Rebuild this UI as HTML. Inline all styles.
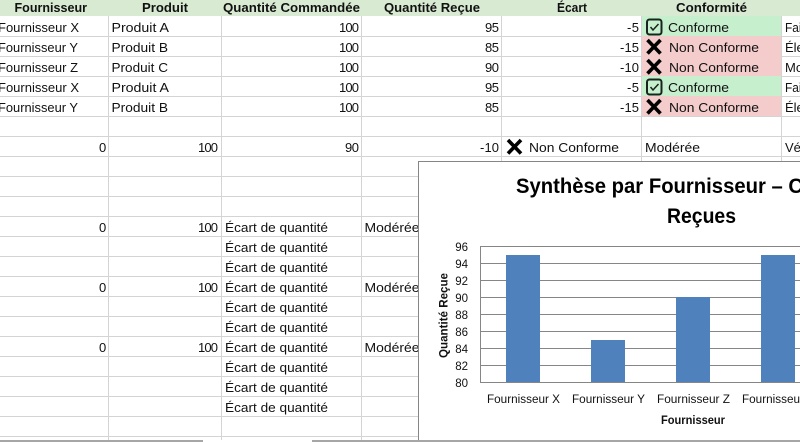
<!DOCTYPE html>
<html lang="fr">
<head>
<meta charset="utf-8">
<title>Synthèse</title>
<style>
html,body{margin:0;padding:0;background:#fff;width:800px;height:442px;overflow:hidden}
svg{display:block;font-family:"Liberation Sans",sans-serif}
.c{font-size:13px;fill:#111}
.h{font-size:13px;font-weight:bold;fill:#111}
.e{text-anchor:end}
.g{fill:#d4d4d4}
.a{font-size:11.5px;fill:#111}
</style>
</head>
<body>
<svg width="800" height="442" viewBox="0 0 800 442" xmlns="http://www.w3.org/2000/svg" xmlns:xlink="http://www.w3.org/1999/xlink">
<defs>
<g id="x"><path d="M1.500 1L14.500 14.500M14.500 1L1.500 14.500" stroke="#000" stroke-width="3.600" fill="none"/></g>
<g id="k"><rect x="1" y="0.500" width="14.500" height="15" rx="2.500" fill="none" stroke="#18241d" stroke-width="2"/><path d="M4.500 8L7 11L12.500 5" stroke="#18241d" stroke-width="1.500" fill="none"/></g>
</defs>

<rect x="0" y="0" width="800" height="16" fill="#d9ead3"/>
<rect x="642" y="16" width="139" height="20" fill="#c6efce"/>
<rect x="642" y="36" width="139" height="40" fill="#f4cccc"/>
<rect x="642" y="76" width="139" height="20" fill="#c6efce"/>
<rect x="642" y="96" width="139" height="20" fill="#f4cccc"/>

<!-- horizontal grid -->
<g class="g">
<rect x="0" y="36" width="642" height="1"/><rect x="781" y="36" width="19" height="1"/>
<rect x="0" y="56" width="642" height="1"/><rect x="781" y="56" width="19" height="1"/>
<rect x="0" y="76" width="642" height="1"/><rect x="781" y="76" width="19" height="1"/>
<rect x="0" y="96" width="642" height="1"/><rect x="781" y="96" width="19" height="1"/>
<rect x="0" y="116" width="800" height="1"/>
<rect x="0" y="136" width="800" height="1"/>
<rect x="0" y="156" width="800" height="1"/>
<rect x="0" y="176" width="800" height="1"/>
<rect x="0" y="196" width="800" height="1"/>
<rect x="0" y="216" width="800" height="1"/>
<rect x="0" y="236" width="800" height="1"/>
<rect x="0" y="256" width="800" height="1"/>
<rect x="0" y="276" width="800" height="1"/>
<rect x="0" y="296" width="800" height="1"/>
<rect x="0" y="316" width="800" height="1"/>
<rect x="0" y="336" width="800" height="1"/>
<rect x="0" y="356" width="800" height="1"/>
<rect x="0" y="376" width="800" height="1"/>
<rect x="0" y="396" width="800" height="1"/>
<rect x="0" y="416" width="800" height="1"/>
<rect x="0" y="436" width="800" height="1"/>
<!-- vertical grid -->
<rect x="108" y="16" width="1" height="424"/>
<rect x="221" y="16" width="1" height="424"/>
<rect x="361" y="16" width="1" height="424"/>
<rect x="501" y="16" width="1" height="424"/>
<rect x="641" y="16" width="1" height="424"/>
<rect x="781" y="16" width="1" height="424"/>
</g>

<!-- headers -->
<g class="h">
<text x="14.500" y="12" textLength="72.500" lengthAdjust="spacingAndGlyphs">Fournisseur</text>
<text x="142" y="12" textLength="46" lengthAdjust="spacingAndGlyphs">Produit</text>
<text x="223" y="12" textLength="137" lengthAdjust="spacingAndGlyphs">Quantité Commandée</text>
<text x="384" y="12" textLength="96" lengthAdjust="spacingAndGlyphs">Quantité Reçue</text>
<text x="557" y="12" textLength="30" lengthAdjust="spacingAndGlyphs">Écart</text>
<text x="676" y="12" textLength="71" lengthAdjust="spacingAndGlyphs">Conformité</text>
</g>

<!-- data -->
<g class="c">
<text x="-2" y="32" textLength="81" lengthAdjust="spacingAndGlyphs">Fournisseur X</text>
<text x="-2" y="52" textLength="80" lengthAdjust="spacingAndGlyphs">Fournisseur Y</text>
<text x="-2" y="72" textLength="80" lengthAdjust="spacingAndGlyphs">Fournisseur Z</text>
<text x="-2" y="92" textLength="81" lengthAdjust="spacingAndGlyphs">Fournisseur X</text>
<text x="-2" y="112" textLength="80" lengthAdjust="spacingAndGlyphs">Fournisseur Y</text>

<text x="111.500" y="32" textLength="57.500" lengthAdjust="spacingAndGlyphs">Produit A</text>
<text x="111.500" y="52" textLength="56.500" lengthAdjust="spacingAndGlyphs">Produit B</text>
<text x="111.500" y="72" textLength="56.500" lengthAdjust="spacingAndGlyphs">Produit C</text>
<text x="111.500" y="92" textLength="57.500" lengthAdjust="spacingAndGlyphs">Produit A</text>
<text x="111.500" y="112" textLength="56.500" lengthAdjust="spacingAndGlyphs">Produit B</text>

<text x="339" y="32" textLength="20">100</text>
<text x="339" y="52" textLength="20">100</text>
<text x="339" y="72" textLength="20">100</text>
<text x="339" y="92" textLength="20">100</text>
<text x="339" y="112" textLength="20">100</text>

<text x="485" y="32" textLength="14">95</text>
<text x="485" y="52" textLength="14">85</text>
<text x="485" y="72" textLength="14">90</text>
<text x="485" y="92" textLength="14">95</text>
<text x="485" y="112" textLength="14">85</text>

<text x="627" y="32" textLength="12">-5</text>
<text x="620" y="52" textLength="19">-15</text>
<text x="620" y="72" textLength="19">-10</text>
<text x="627" y="92" textLength="12">-5</text>
<text x="620" y="112" textLength="19">-15</text>

<text x="668" y="32" textLength="61" lengthAdjust="spacingAndGlyphs">Conforme</text>
<text x="669" y="52" textLength="90" lengthAdjust="spacingAndGlyphs">Non Conforme</text>
<text x="669" y="72" textLength="90" lengthAdjust="spacingAndGlyphs">Non Conforme</text>
<text x="668" y="92" textLength="61" lengthAdjust="spacingAndGlyphs">Conforme</text>
<text x="669" y="112" textLength="90" lengthAdjust="spacingAndGlyphs">Non Conforme</text>

<text x="785" y="32" textLength="16.500" lengthAdjust="spacingAndGlyphs">Fai</text>
<text x="785" y="52">Éle</text>
<text x="785" y="72">Mo</text>
<text x="785" y="92" textLength="16.500" lengthAdjust="spacingAndGlyphs">Fai</text>
<text x="785" y="112">Éle</text>

<text x="99" y="152">0</text>
<text x="198" y="152" textLength="20">100</text>
<text x="345" y="152" textLength="14">90</text>
<text x="480" y="152" textLength="19">-10</text>
<text x="529" y="152" textLength="90" lengthAdjust="spacingAndGlyphs">Non Conforme</text>
<text x="645" y="152" textLength="55" lengthAdjust="spacingAndGlyphs">Modérée</text>
<text x="785" y="152">Vé</text>

<text x="99" y="232">0</text><text x="198" y="232" textLength="20">100</text>
<text x="99" y="292">0</text><text x="198" y="292" textLength="20">100</text>
<text x="99" y="352">0</text><text x="198" y="352" textLength="20">100</text>

<text x="225" y="232" textLength="103" lengthAdjust="spacingAndGlyphs">Écart de quantité</text>
<text x="225" y="252" textLength="103" lengthAdjust="spacingAndGlyphs">Écart de quantité</text>
<text x="225" y="272" textLength="103" lengthAdjust="spacingAndGlyphs">Écart de quantité</text>
<text x="225" y="292" textLength="103" lengthAdjust="spacingAndGlyphs">Écart de quantité</text>
<text x="225" y="312" textLength="103" lengthAdjust="spacingAndGlyphs">Écart de quantité</text>
<text x="225" y="332" textLength="103" lengthAdjust="spacingAndGlyphs">Écart de quantité</text>
<text x="225" y="352" textLength="103" lengthAdjust="spacingAndGlyphs">Écart de quantité</text>
<text x="225" y="372" textLength="103" lengthAdjust="spacingAndGlyphs">Écart de quantité</text>
<text x="225" y="392" textLength="103" lengthAdjust="spacingAndGlyphs">Écart de quantité</text>
<text x="225" y="412" textLength="103" lengthAdjust="spacingAndGlyphs">Écart de quantité</text>

<text x="364.500" y="232" textLength="55" lengthAdjust="spacingAndGlyphs">Modérée</text>
<text x="364.500" y="292" textLength="55" lengthAdjust="spacingAndGlyphs">Modérée</text>
<text x="364.500" y="352" textLength="55" lengthAdjust="spacingAndGlyphs">Modérée</text>
</g>

<!-- icons -->
<use xlink:href="#k" href="#k" x="646" y="19"/>
<use xlink:href="#x" href="#x" x="646" y="39"/>
<use xlink:href="#x" href="#x" x="646" y="59"/>
<use xlink:href="#k" href="#k" x="646" y="79"/>
<use xlink:href="#x" href="#x" x="646" y="99"/>
<use xlink:href="#x" href="#x" x="506.500" y="139"/>

<!-- bottom bars -->
<rect x="0" y="440" width="203" height="2" fill="#a6a6a6"/>
<rect x="312" y="440" width="488" height="2" fill="#a6a6a6"/>

<!-- chart -->
<rect x="418" y="161" width="382" height="279" fill="#fff"/>
<rect x="418" y="161" width="382" height="1" fill="#868686"/>
<rect x="418" y="161" width="1" height="281" fill="#868686"/>
<rect x="418" y="440" width="382" height="2" fill="#a6a6a6"/>

<text x="516" y="193" font-size="21" font-weight="bold" fill="#000" textLength="287" lengthAdjust="spacingAndGlyphs">Synthèse par Fournisseur – C</text>
<text x="667" y="223" font-size="21" font-weight="bold" fill="#000" textLength="69" lengthAdjust="spacingAndGlyphs">Reçues</text>

<g fill="#868686">
<rect x="480" y="246" width="320" height="1"/>
<rect x="480" y="263" width="320" height="1"/>
<rect x="480" y="280" width="320" height="1"/>
<rect x="480" y="297" width="320" height="1"/>
<rect x="480" y="314" width="320" height="1"/>
<rect x="480" y="331" width="320" height="1"/>
<rect x="480" y="348" width="320" height="1"/>
<rect x="480" y="365" width="320" height="1"/>
<rect x="480" y="382" width="320" height="1"/>
<rect x="480" y="246" width="1" height="137"/>
</g>
<g fill="#4f81bd">
<rect x="506" y="255" width="34" height="127"/>
<rect x="591" y="340" width="34" height="42"/>
<rect x="676" y="297" width="34" height="85"/>
<rect x="761" y="255" width="34" height="127"/>
</g>

<g class="a e">
<text x="468" y="251">96</text>
<text x="468" y="268">94</text>
<text x="468" y="285">92</text>
<text x="468" y="302">90</text>
<text x="468" y="319">88</text>
<text x="468" y="336">86</text>
<text x="468" y="353">84</text>
<text x="468" y="370">82</text>
<text x="468" y="387">80</text>
</g>
<g class="a">
<text x="487" y="403" textLength="73" lengthAdjust="spacingAndGlyphs">Fournisseur X</text>
<text x="572" y="403" textLength="73" lengthAdjust="spacingAndGlyphs">Fournisseur Y</text>
<text x="657" y="403" textLength="73" lengthAdjust="spacingAndGlyphs">Fournisseur Z</text>
<text x="742" y="403" textLength="73" lengthAdjust="spacingAndGlyphs">Fournisseur X</text>
</g>
<text x="661" y="424" font-size="11.500" font-weight="bold" fill="#111" textLength="64" lengthAdjust="spacingAndGlyphs">Fournisseur</text>
<text transform="translate(447.500 358) rotate(-90)" font-size="11.500" font-weight="bold" fill="#111" textLength="85" lengthAdjust="spacingAndGlyphs">Quantité Reçue</text>
</svg>
</body>
</html>
